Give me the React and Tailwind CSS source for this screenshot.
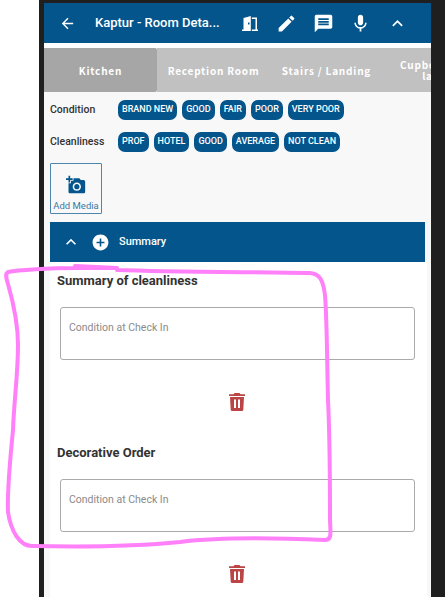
import { MdArrowBack, MdEdit, MdMessage, MdMic, MdKeyboardArrowUp, MdAddAPhoto, MdAddCircle } from 'react-icons/md';

const conditions = ['BRAND NEW', 'GOOD', 'FAIR', 'POOR', 'VERY POOR'];
const cleanliness = ['PROF', 'HOTEL', 'GOOD', 'AVERAGE', 'NOT CLEAN'];

function Door() {
  return (
    <svg width="16" height="15" viewBox="0 0 16 15" fill="none">
      <path fill="#fff" fillRule="evenodd" d="M0 13.500h1.500V2L8.800 0v15H0zM6 6.500v2h1.500v-2z" />
      <path fill="#fff" d="M9.800 1.500H15V13.500h1V15H9.800v-1.500h3.700V3H9.800z" />
    </svg>
  );
}

function Trash() {
  return (
    <svg width="16" height="18" viewBox="0 0 16 18" className="text-[#bb4444]">
      <path fill="currentColor" d="M5.500 0h5l1 1.200H16v1.800H0V1.200h4.500zM1 4h14l-.7 12.500A1.500 1.500 0 0 1 12.800 18H3.200a1.500 1.500 0 0 1-1.500-1.500z" />
      <rect x="5" y="6.500" width="2" height="8.500" fill="#fff" />
      <rect x="9" y="6.500" width="2" height="8.500" fill="#fff" />
    </svg>
  );
}

function Chips({ label, items }) {
  return (
    <div className="flex items-center h-[20px]">
      <div className="w-[68px] text-[10.5px] font-medium text-[#333]">{label}</div>
      <div className="flex gap-[5px]">
        {items.map((item) => (
          <span key={item} className="h-[20px] px-[4px] flex items-center rounded-[7px] bg-[#03558c] text-white text-[9px] font-medium whitespace-nowrap">
            {item}
          </span>
        ))}
      </div>
    </div>
  );
}

function Field({ title, top }) {
  return (
    <div className={top}>
      <div className="text-[13px] leading-[20px] font-bold text-[#333] ml-[7px]">{title}</div>
      <div className="ml-[10px] mr-[12px] mt-[16px] h-[53px] rounded-[3px] border border-[#aaa] bg-white px-[8px] pt-[12px] text-[10.5px] leading-[16px] text-[#8a8a8a]">
        Condition at Check In
      </div>
      <div className="flex justify-center mt-[33px] pr-[3px]">
        <Trash />
      </div>
    </div>
  );
}

export default function App() {
  return (
    <div className="relative w-[445px] h-[597px] overflow-hidden bg-white" style={{ fontFamily: 'Roboto, sans-serif' }}>
      <div className="absolute inset-y-0 left-[39px] right-0 bg-[#1f1f1f] pt-[3px] pl-[5px] pr-[14px]">
        <div className="h-full bg-[#f8f8f8] flex flex-col overflow-hidden">
          <div className="h-[40px] shrink-0 bg-[#03558c] flex items-center text-white">
            <MdArrowBack size={17} className="ml-[15px]" />
            <div className="ml-[19px] w-[125px] text-[13px] font-medium whitespace-nowrap">Kaptur - Room Deta...</div>
            <div className="ml-[22px]"><Door /></div>
            <MdEdit size={21} className="ml-[18px]" />
            <MdMessage size={21} className="ml-[16px]" />
            <MdMic size={21} className="ml-[16px]" />
            <MdKeyboardArrowUp size={21} className="ml-[16px]" />
          </div>
          <div className="h-[5px] shrink-0 bg-white" />
          <div className="h-[44px] shrink-0 flex text-white text-[10px] font-bold tracking-[0.8px] text-center leading-[11px] overflow-hidden" style={{ fontFamily: '"Noto Sans CJK JP", sans-serif' }}>
            <div className="w-[113px] shrink-0 bg-[#a6a6a6] rounded-r-[2px] flex items-center justify-center">Kitchen</div>
            <div className="w-[113px] shrink-0 bg-[#c1c1c1] flex items-center justify-center whitespace-nowrap">Reception Room</div>
            <div className="w-[113px] shrink-0 bg-[#c1c1c1] flex items-center justify-center whitespace-nowrap">Stairs / Landing</div>
            <div className="w-[48px] shrink-0 overflow-hidden bg-[#c1c1c1] flex items-center">
              <div className="w-[113px] shrink-0">Cupboard and<br />larder</div>
            </div>
          </div>
          <div className="flex flex-col gap-[12px] pl-[6px] pt-[8px]">
            <Chips label="Condition" items={conditions} />
            <Chips label="Cleanliness" items={cleanliness} />
          </div>
          <div className="ml-[6px] mt-[11px] w-[52px] h-[51px] shrink-0 border border-[#4d86ad] rounded-[1px] flex flex-col items-center text-[#03558c]">
            <MdAddAPhoto size={20} className="mt-[11px]" />
            <div className="mt-[5px] text-[9.5px] leading-[12px] text-[#3a78a3] whitespace-nowrap">Add Media</div>
          </div>
          <div className="ml-[6px] mr-[6px] mt-[8px] h-[40px] shrink-0 bg-[#03558c] flex items-center text-white">
            <MdKeyboardArrowUp size={20} className="ml-[11px]" />
            <MdAddCircle size={19} className="ml-[10px]" />
            <div className="ml-[9px] text-[11px] font-medium">Summary</div>
          </div>
          <div className="ml-[6px] mr-[4px] flex-1 bg-white pt-[9px]">
            <Field title="Summary of cleanliness" top="" />
            <Field title="Decorative Order" top="mt-[31.5px]" />
          </div>
        </div>
      </div>
      {/* hand drawn marker over the screenshot */}
      <svg className="absolute inset-0 pointer-events-none" width="445" height="597" viewBox="0 0 445 597" fill="none">
        <path
          d="M75 266 L117 268 L75 268 C50 268 18 270 8 272 C5 274 6 278 8 284 C14 305 18 325 18 345 C18 375 14 400 13 430 C10 460 7 490 8 512 C11 532 20 546 32 546 C80 547 140 546 180 542 C220 537 280 538 325 540 C331 540 331 536 330 520 C330 480 330 440 328 400 C327 360 327 320 325 295 C323 280 320 274 310 273 C260 272 170 272 117 270"
          stroke="#ff80f8"
          strokeWidth="4"
          strokeLinecap="round"
          strokeLinejoin="round"
        />
      </svg>
    </div>
  );
}
